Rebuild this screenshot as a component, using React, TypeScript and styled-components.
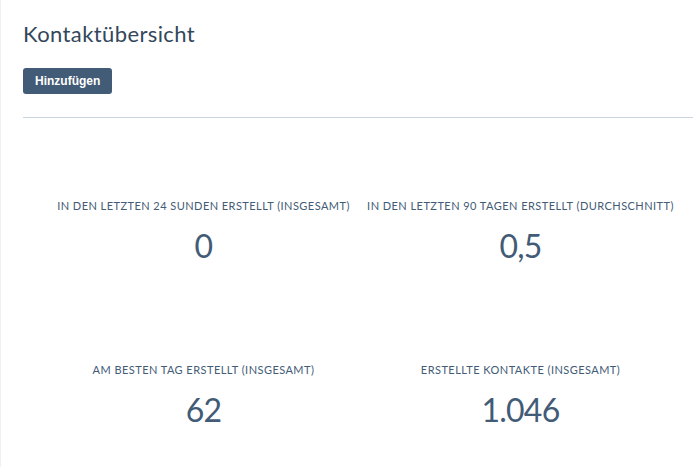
import styled, { createGlobalStyle } from 'styled-components'

const GlobalStyle = createGlobalStyle`
  html, body {
    margin: 0;
    padding: 0;
    background: #ffffff;
  }
  body {
    font-family: Lato, "Open Sans", sans-serif;
    color: #33475b;
  }
`

const Page = styled.div`
  height: 467px;
  overflow: hidden;
  border-left: 1px solid #eef0f2;
  padding: 20px 0 0 22px;
  box-sizing: border-box;
`

const Title = styled.h1`
  margin: 0;
  font-size: 22px;
  font-weight: 400;
  letter-spacing: 0.4px;
  line-height: 28px;
  color: #33475b;
`

const Button = styled.button`
  margin-top: 20px;
  height: 26px;
  padding: 0 12px;
  border: 0;
  border-radius: 3px;
  background: #425b76;
  color: #ffffff;
  font-family: "Liberation Sans", Arial, sans-serif;
  font-size: 12px;
  font-weight: 700;
  cursor: pointer;
`

const Divider = styled.hr`
  margin: 23px 0 0;
  border: 0;
  border-top: 1px solid #cbd6e2;
`

const Grid = styled.div`
  display: grid;
  grid-template-columns: 317px 317px;
  grid-template-rows: 164px auto;
  margin: 81px 0 0 22px;
`

const Stat = styled.div`
  display: flex;
  flex-direction: column;
  align-items: center;
  gap: 14px;
`

const Label = styled.div`
  font-size: 11px;
  letter-spacing: 0.45px;
  text-transform: uppercase;
  white-space: nowrap;
  color: #425b76;
`

const Value = styled.div`
  font-size: 32px;
  font-weight: 400;
  letter-spacing: -0.8px;
  line-height: 40px;
  color: #425b76;
`

const stats = [
  { label: 'In den letzten 24 Sunden erstellt (insgesamt)', value: '0' },
  { label: 'In den letzten 90 Tagen erstellt (Durchschnitt)', value: '0,5' },
  { label: 'Am besten Tag erstellt (insgesamt)', value: '62' },
  { label: 'Erstellte Kontakte (insgesamt)', value: '1.046' },
]

export default function App() {
  return (
    <>
      <GlobalStyle />
      <Page>
        <Title>Kontaktübersicht</Title>
        <Button>Hinzufügen</Button>
        <Divider />
        <Grid>
          {stats.map((s) => (
            <Stat key={s.label}>
              <Label>{s.label}</Label>
              <Value>{s.value}</Value>
            </Stat>
          ))}
        </Grid>
      </Page>
    </>
  )
}
